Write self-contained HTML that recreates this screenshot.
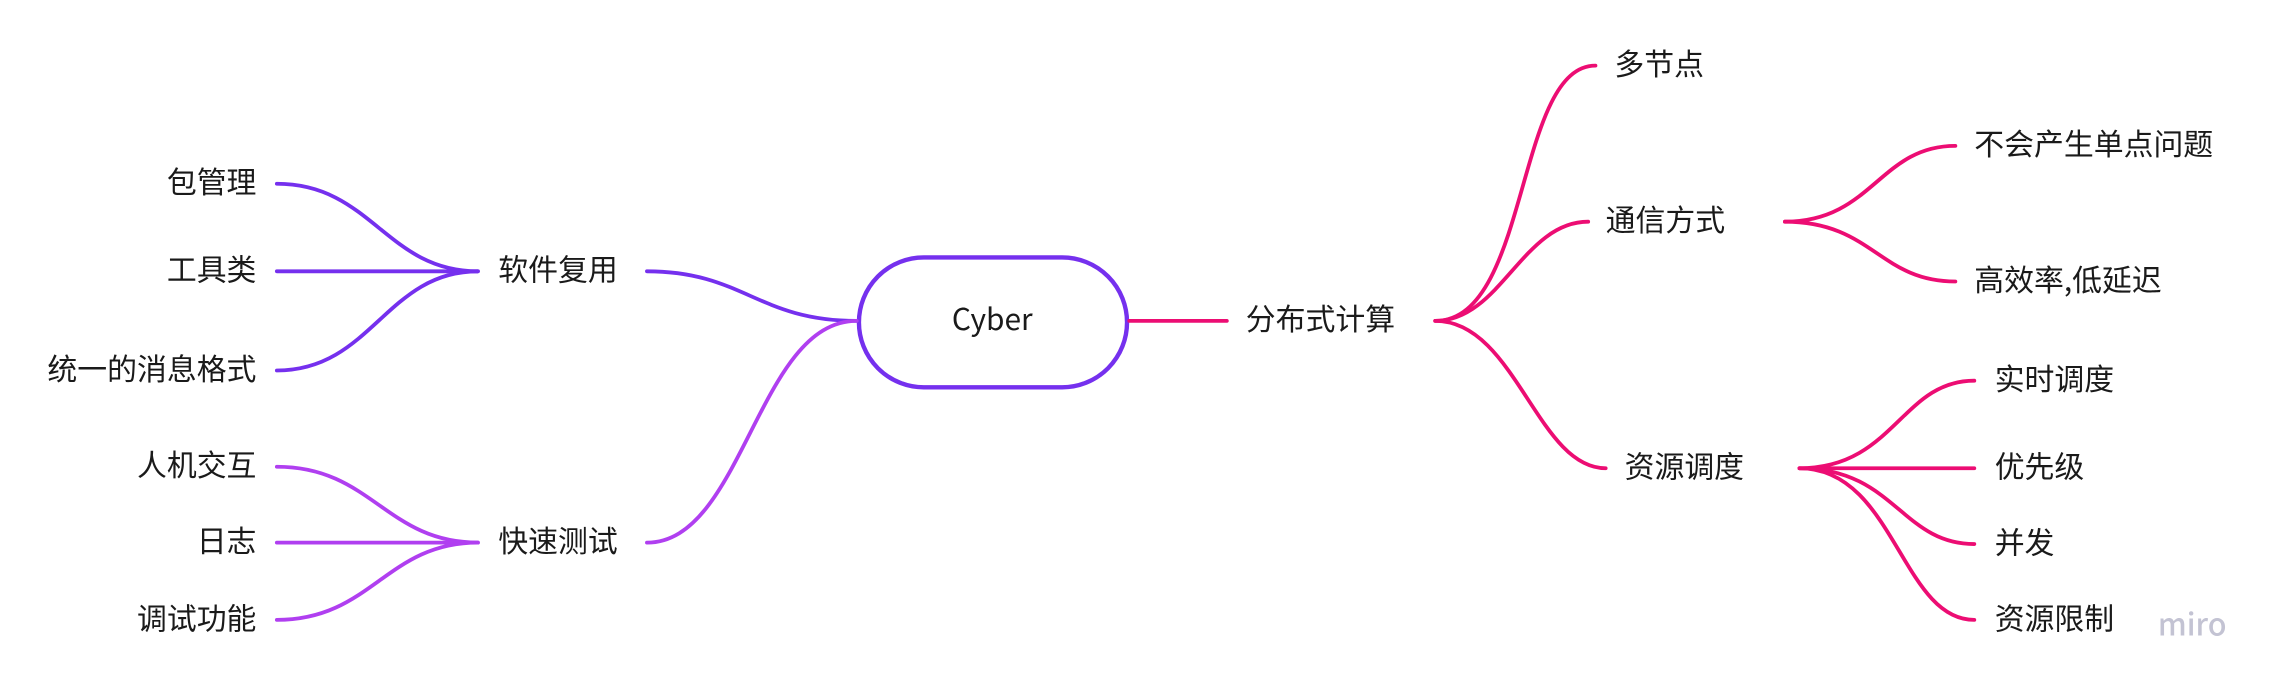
<!DOCTYPE html>
<html><head><meta charset="utf-8"><style>
html,body{margin:0;padding:0;background:#fff;width:2273px;height:687px;overflow:hidden}
svg{display:block}
text{font-family:"Noto Sans CJK SC","Liberation Sans",sans-serif;font-size:20.5px;fill:#1a1a1a;dominant-baseline:central}
</style></head><body>
<svg width="2273" height="687" viewBox="0 0 1560 471" preserveAspectRatio="none" xmlns="http://www.w3.org/2000/svg">
<g fill="none" stroke-width="2.6" stroke-linecap="round">
<rect x="589.5" y="176.5" width="184" height="89" rx="44.5" stroke="#7530ee" stroke-width="3"/>
<g stroke="#ec0d73">
<path d="M775 220 H842"/>
<path d="M985 220 C1050 220,1040 45,1095 45"/>
<path d="M985 220 C1030 220,1045 152,1090 152"/>
<path d="M985 220 C1040 220,1055 321,1102 321"/>
<path d="M1225 152 C1285 152,1290 100,1342 100"/>
<path d="M1225 152 C1285 152,1290 193,1342 193"/>
<path d="M1235 321 C1300 321,1305 261,1355 261"/>
<path d="M1235 321 H1355"/>
<path d="M1235 321 C1300 321,1305 373,1355 373"/>
<path d="M1235 321 C1300 321,1305 425,1355 425"/>
</g>
<g stroke="#7530ee">
<path d="M588 220 C520 220,510 186,444 186"/>
<path d="M328 186 C265 186,255 126,190 126"/>
<path d="M328 186 H190"/>
<path d="M328 186 C265 186,255 254,190 254"/>
</g>
<g stroke="#b03ff0">
<path d="M588 220 C520 220,510 372,444 372"/>
<path d="M328 372 C265 372,255 320,190 320"/>
<path d="M328 372 H190"/>
<path d="M328 372 C265 372,255 425,190 425"/>
</g>
</g>
<g transform="translate(0,-2.5)">
<text x="681" y="220" text-anchor="middle">Cyber</text>
<text x="855" y="220">分布式计算</text>
<text x="1108" y="45">多节点</text>
<text x="1102" y="152">通信方式</text>
<text x="1115" y="321">资源调度</text>
<text x="1355" y="100">不会产生单点问题</text>
<text x="1355" y="193">高效率,低延迟</text>
<text x="1369" y="261">实时调度</text>
<text x="1369" y="321">优先级</text>
<text x="1369" y="373">并发</text>
<text x="1369" y="425">资源限制</text>
<text x="342" y="186">软件复用</text>
<text x="342" y="372">快速测试</text>
<text x="176" y="126" text-anchor="end">包管理</text>
<text x="176" y="186" text-anchor="end">工具类</text>
<text x="176" y="254" text-anchor="end">统一的消息格式</text>
<text x="176" y="320" text-anchor="end">人机交互</text>
<text x="176" y="372" text-anchor="end">日志</text>
<text x="176" y="425" text-anchor="end">调试功能</text>
<text x="1481" y="429" style="fill:#c3c3d3;font-size:21px;font-weight:500">miro</text>
</g>
</svg>
</body></html>
